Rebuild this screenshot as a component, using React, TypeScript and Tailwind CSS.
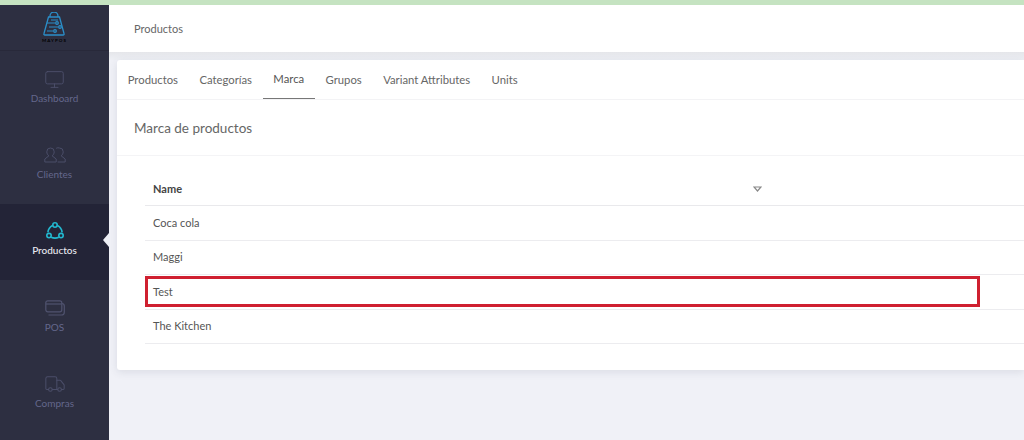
import { Monitor, Truck } from "lucide-react";

const tabs = ["Productos", "Categorías", "Marca", "Grupos", "Variant Attributes", "Units"];
const brands = ["Coca cola", "Maggi", "Test", "The Kitchen"];

function ProductsIcon() {
  return (
    <svg className="-mt-[2px]" width="20" height="20" viewBox="0 0 20 20" fill="none" stroke="#22b8cf" strokeWidth="1.6">
      <path d="M7.6 4.6C5 5.8 3.3 8.2 2.9 11.4M12.4 4.6c2.6 1.2 4.300 3.600 4.700 6.800M6.100 16.300c2.500 1 5.300 1 7.800 0" />
      <circle cx="10" cy="4" r="2.200" />
      <circle cx="4" cy="14.600" r="2.200" />
      <circle cx="16" cy="14.600" r="2.200" />
    </svg>
  );
}

function PosIcon() {
  return (
    <svg width="20" height="16" viewBox="0 0 20 16" fill="none" stroke="#50536f" strokeWidth="1.2">
      <rect x="0.800" y="0.800" width="16" height="11" rx="2" />
      <path d="M0.800 4h16" />
      <path d="M3.500 15h13a2.800 2.800 0 0 0 2.800-2.800V6a2.500 2.500 0 0 0-2.500-2.500" />
    </svg>
  );
}

function ClientsIcon() {
  return (
    <svg width="22" height="16" viewBox="0 0 22 16" fill="none" stroke="#4b4e69" strokeWidth="1">
      <path d="M6.500 1a3.700 3.700 0 0 0-3.700 3.800c0 1.800.9 3.200 2.100 4L.8 12v3h11.400v-3L8.100 8.800c1.200-.8 2.100-2.200 2.100-4A3.700 3.700 0 0 0 6.500 1Z" />
      <path d="M12.200 1.300a3.700 3.700 0 0 1 3.300-.3 3.700 3.700 0 0 1 3.700 3.800c0 1.800-.9 3.200-2.100 4l4.100 3.200v3h-7.500" />
    </svg>
  );
}

function Logo() {
  return (
    <div className="flex flex-col items-center">
      <svg width="22" height="24" viewBox="0 0 22 24" fill="none" stroke="#2b8fc9" strokeWidth="1.3">
        <path d="M7 5V4a4 4 0 0 1 8 0v1" />
        <path d="M5.500 5h11L21 21.500a1 1 0 0 1-1 1.500H2a1 1 0 0 1-1-1.500Z" />
        <path d="M4 11h8M8 8h7M6 15h9M4 19h6" strokeWidth="1.100" />
        <circle cx="14" cy="11" r="1.300" />
        <circle cx="17" cy="15" r="1.300" />
        <circle cx="12" cy="19" r="1.300" />
      </svg>
      <span className="mt-[2px] text-[4.500px] leading-[6px] font-bold tracking-[1px] text-black">MAYPOS</span>
    </div>
  );
}

function NavItem({ icon, label, active }: { icon: React.ReactNode; label: string; active?: boolean }) {
  return (
    <div className={`relative flex h-[76.300px] flex-col items-center pt-[18px] ${active ? "bg-[#232437]" : ""}`}>
      <div className="flex h-5 items-center justify-center">{icon}</div>
      <span className={`text-[10px] leading-4 ${active ? "mt-0 font-medium text-[#e9e9f0]" : "mt-[1px] text-[#64678c]"}`}>{label}</span>
      {active && (
        <span className="absolute top-[29px] right-0 h-0 w-0 border-y-[7px] border-r-[6px] border-y-transparent border-r-[#eef0f5]" />
      )}
    </div>
  );
}

export default function App() {
  return (
    <div className="flex h-[440px] w-[1024px] flex-col overflow-hidden bg-[#f0f1f7] font-['Lato',sans-serif] text-[#555]">
      <div className="h-[5px] bg-[#c5e3c1]" />
      <div className="flex min-h-0 flex-1">
        <aside className="w-[109px] shrink-0 overflow-hidden bg-[#2d2f41]">
          <div className="flex h-[46px] items-start justify-center border-b border-[#28293a] pt-[7px]">
            <Logo />
          </div>
          <NavItem icon={<Monitor size={21} color="#4b4e69" strokeWidth={1.1} />} label="Dashboard" />
          <NavItem icon={<ClientsIcon />} label="Clientes" />
          <NavItem icon={<ProductsIcon />} label="Productos" active />
          <NavItem icon={<PosIcon />} label="POS" />
          <NavItem icon={<Truck size={22} color="#4b4e69" strokeWidth={1.1} />} label="Compras" />
        </aside>

        <main className="min-w-0 flex-1">
          <header className="flex h-[47px] items-center bg-white pt-[1px] pl-[25px] text-[11px] text-[#666]">Productos</header>
          <div className="h-[8px] bg-gradient-to-b from-[#e5e6ea] to-[#eef0f5]" />
          <section className="ml-[8px] h-[310px] rounded-l-[3px] bg-white shadow-[0_2px_8px_rgba(60,65,90,0.12)]">
            <nav className="flex h-10 items-stretch border-b border-[#f3f3f5] text-[11.300px] text-[#666]">
              {tabs.map((tab) => (
                <div
                  key={tab}
                  className={`flex items-center px-[10.700px] pt-[1px] ${tab === "Marca" ? "border-b border-[#777] text-[#555]" : ""}`}
                >
                  {tab}
                </div>
              ))}
            </nav>
            <h2 className="flex h-[56px] items-center border-b border-[#f4f4f6] pt-[2px] pl-[17px] text-[13.500px] font-normal text-[#666]">
              Marca de productos
            </h2>
            <div className="ml-[28px] pt-4">
              <div className="relative flex h-[34px] items-center border-b border-[#e9e9ec] pt-[2px] pl-[8px] text-[11px] font-bold text-[#444]">
                Name
                <svg className="absolute top-[14px] left-[608px]" width="9" height="6" viewBox="0 0 9 6" fill="none" stroke="#888" strokeWidth="1.2">
                  <path d="M1 1h7L4.500 5Z" />
                </svg>
              </div>
              {brands.map((brand) => (
                <div key={brand} className="relative flex h-[34.500px] items-center border-b border-[#ececef] pl-[8px] text-[11px] text-[#555]">
                  {brand}
                  {brand === "Test" && (
                    <span className="absolute top-[1px] left-0 h-[31px] w-[835px] border-[3px] border-[#cf2030]" />
                  )}
                </div>
              ))}
            </div>
          </section>
        </main>
      </div>
    </div>
  );
}
